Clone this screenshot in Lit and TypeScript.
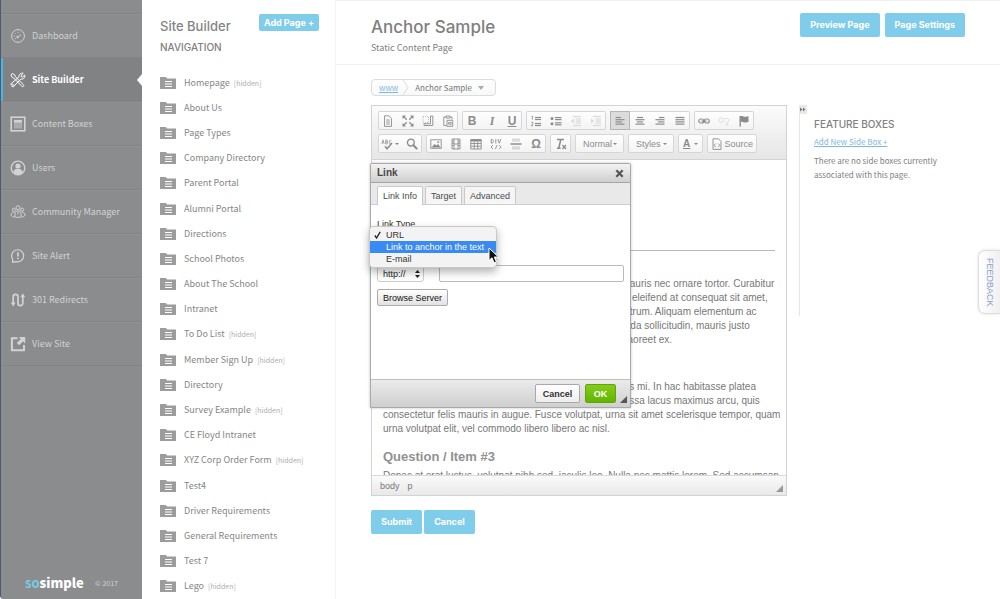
import { LitElement, html, svg, css, nothing } from "lit";
import { customElement } from "lit/decorators.js";
import { classMap } from "lit/directives/class-map.js";

const menuIcons: Record<string, unknown> = {
  dashboard: svg`<circle cx="8" cy="8" r="6.4"/><path d="M7.4 9.6 11 6.6M5 10.5h.9M3.8 8h1M5 5.3l.6.6M8 3.9v.9" /><circle cx="7.6" cy="9" r=".9"/>`,
  tools: svg`<path d="M2.2 1.4 4.9 3l.3 1.5 8.2 8.2a1.1 1.1 0 0 1-1.6 1.6L3.7 6 2.4 5.6 1 3z"/><path d="M13.2 1.3 11 3.4l.2 1.4 1.4.3 2.1-2.2c.6 1.7-.2 3.6-2 4.1-.6.2-1.2.1-1.7 0L4.9 13c-.2 1.5-1.8 2.1-3 1.5l1.600-1.600-.8-1-1.600 1.300c-.5-1.200.3-2.700 1.700-2.900L9 4.900C8.500 2.800 11 .5 13.200 1.300z"/>`,
  boxes: svg`<rect x="1.2" y="1.2" width="13.6" height="13.6" stroke-width="1.6"/><rect x="4" y="4" width="8" height="8.5" fill="currentColor" opacity=".45" stroke="none"/><path d="M4 5.2h8" stroke-width="2.6"/>`,
  users: svg`<circle cx="8" cy="8" r="6.8" stroke-width="1.3"/><circle cx="8" cy="6" r="2.6" fill="currentColor" stroke="none"/><path d="M3.4 12.6c.3-3 1.8-3.6 4.6-3.6s4.3.6 4.6 3.6A6.5 6.5 0 0 1 8 14.3a6.5 6.5 0 0 1-4.6-1.7z" fill="currentColor" stroke="none"/>`,
  community: svg`<circle cx="8" cy="3.8" r="2"/><circle cx="3.8" cy="5.6" r="1.5"/><circle cx="12.2" cy="5.6" r="1.5"/><path d="M4.8 12.5 5.2 8c1-1.3 4.6-1.3 5.6 0l.4 4.5c-1 1.2-5.4 1.2-6.4 0zM4 8c-2 0-2.6 1-2.9 3.5.7 1 2 1.5 3.7 1.6M12 8c2 0 2.6 1 2.9 3.5-.7 1-2 1.5-3.7 1.6M8 7.5v3"/>`,
  alert: svg`<path d="M2.6 14.2V11A6 6 0 1 1 6.200 13.600z" stroke-width="1.200"/><path d="M8 4.2v4.3" stroke-width="1.7"/><path d="M8 9.8v1.5" stroke-width="1.7"/>`,
  redirects: svg`<path d="M3.2 12V4.8a2.4 2.4 0 0 1 4.8 0v6.4a2.4 2.4 0 0 0 4.8 0V4" stroke-width="1.7"/><path d="M.8 10.5h4.800l-2.400 4zM10.400 5.200h4.800l-2.400-4z" fill="currentColor" stroke="none"/>`,
  view: svg`<path d="M7.5 2.2H1.900V14.200H14V9" stroke-width="2"/><path d="M8.800 1h6.400v6.400l-2.100-2.100-4 4-2.300-2.300 4-4z" fill="currentColor" stroke="none"/>`,
};

const lines = (rows: [number, number, number][]) =>
  rows.map(([x1, x2, y]) => svg`<path d="M${x1} ${y}H${x2}" stroke-width="1.2"/>`);

const toolIcons: Record<string, unknown> = {
  doc: svg`<path d="M2.5.8h4.5l2.500 2.600v8H2.500zM4.200 5h3.600M4.200 7h3.600M4.200 9h3.600"/>`,
  maximize: svg`<path d="M1.5 1.5 4.7 4.7M10.5 1.5 7.3 4.7M1.5 10.5l3.2-3.2M10.5 10.5 7.3 7.3" stroke-width="1.3"/><path d="M.5.5H4L.5 4zM11.5.5V4L8 .5zM.5 11.5V8L4 11.5zM11.5 11.5H8L11.5 8z" fill="currentColor" stroke="none"/>`,
  blocks: svg`<path d="M1 1.5h5.500v6H1z" stroke-dasharray="1 1" opacity=".6"/><path d="M8.500 1h2.300v9.500H2v-1.800h6.500z"/>`,
  paste: svg`<path d="M4 2H1.800v8.500H4.500M8 2h2v2.500M4 1h4v2H4z"/><path d="M5 5.300h5.700v6H5zM6.700 7.400h2.500v1.800H6.700z"/>`,
  numbers: svg`<path d="M1.500 1.200h.9v3.300M1.300 7.300h1.500v1.500L1.300 10.800h1.700"/>${lines([[5, 11, 2.5], [5, 11, 4.5], [5, 11, 8.5], [5, 11, 10.5]])}`,
  bullets: svg`<circle cx="2" cy="3.5" r="1.5" fill="currentColor" stroke="none"/><circle cx="2" cy="8.7" r="1.5" fill="currentColor" stroke="none"/>${lines([[5, 11.5, 2.6], [5, 11.5, 4.6], [5, 11.5, 7.8], [5, 11.5, 9.8]])}`,
  outdent: svg`<path d="M.8 6 3.8 3.500v5z" fill="currentColor" stroke="none"/>${lines([[3, 11, 1.5], [5.5, 11, 4], [5.5, 11, 6], [5.5, 11, 8], [3, 11, 10.5]])}`,
  indent: svg`<path d="M4 6 1 3.500v5z" fill="currentColor" stroke="none"/>${lines([[3, 11, 1.5], [5.5, 11, 4], [5.5, 11, 6], [5.5, 11, 8], [3, 11, 10.5]])}`,
  left: svg`${lines([[1.5, 7, 2.5], [1.5, 10.5, 4.7], [1.5, 8, 6.9], [1.5, 10.5, 9.1]])}`,
  center: svg`${lines([[3, 9, 2.5], [1.5, 10.5, 4.7], [3, 9, 6.9], [1.5, 10.5, 9.1]])}`,
  right: svg`${lines([[5, 10.5, 2.5], [1.5, 10.5, 4.7], [4, 10.5, 6.9], [1.5, 10.5, 9.1]])}`,
  justify: svg`${lines([[1.5, 10.5, 2.5], [1.5, 10.5, 4.7], [1.5, 10.5, 6.9], [1.5, 10.5, 9.1]])}`,
  link: svg`<rect x=".8" y="4" width="5" height="4" rx="2" stroke-width="1.2"/><rect x="6.2" y="4" width="5" height="4" rx="2" stroke-width="1.2"/><path d="M3.5 6h5" stroke-width="1.2"/>`,
  unlink: svg`<rect x=".8" y="3" width="5" height="4" rx="2"/><path d="M7 3.5h2.500a1.800 1.800 0 0 1 0 3.500H8M7.500 8l3 3M10.500 8l-3 3"/>`,
  flag: svg`<path d="M2.2 1v10.5" stroke-width="1.4"/><path d="M2.5 1.2c2-.8 3.4.8 5 .5.9-.1 1.8-.5 3-.5V7c-1.200 0-2 .5-3 .6-1.800.1-3-1.300-5-.6z" fill="currentColor" stroke="none"/>`,
  find: svg`<circle cx="4.8" cy="4.6" r="3.4" stroke-width="1.3"/><path d="m7.4 7.2 3.8 3.9" stroke-width="2"/>`,
  image: svg`<rect x=".8" y="1.8" width="10.4" height="8.5"/><path d="M1.5 9.5 4.5 6l1.800 1.500L8 6l2.700 3.500z" fill="currentColor" stroke="none"/><circle cx="8.3" cy="4.2" r=".9" fill="currentColor" stroke="none"/>`,
  film: svg`<path d="M2 1h8v10H2zM4 1v10M8 1v10M4 6h4M2 3.200h2M2 5.400h2M2 7.600h2M8 3.200h2M8 5.400h2M8 7.600h2"/>`,
  table: svg`<path d="M.8 1.5h10.400v9.500H.8zM.8 5.500h10.400M.8 8.200h10.400M4.200 3.500V11M7.700 3.500V11"/><path d="M.8 2.500h10.400" stroke-width="2"/>`,
  rule: svg`<path d="M2 1.2h8M2 3h8M2 9h8M2 10.800h8" opacity=".55"/><path d="M.5 6h11" stroke-width="1.5"/>`,
  source: svg`<path d="M2 .8h5.500L10 3.400v8H2z"/><path d="M4.800 5.500 3.200 7.300l1.600 1.800M7.200 5.500l1.600 1.800-1.600 1.800"/>`,
};

const icon12 = (name: string) =>
  html`<svg class="ico" viewBox="0 0 12 12" width="12" height="12" aria-hidden="true">${toolIcons[name]}</svg>`;

const menu = [
  ["dashboard", "Dashboard"],
  ["tools", "Site Builder"],
  ["boxes", "Content Boxes"],
  ["users", "Users"],
  ["community", "Community Manager"],
  ["alert", "Site Alert"],
  ["redirects", "301 Redirects"],
  ["view", "View Site"],
];

const pages: { name: string; hidden?: boolean }[] = [
  { name: "Homepage", hidden: true },
  { name: "About Us" },
  { name: "Page Types" },
  { name: "Company Directory" },
  { name: "Parent Portal" },
  { name: "Alumni Portal" },
  { name: "Directions" },
  { name: "School Photos" },
  { name: "About The School" },
  { name: "Intranet" },
  { name: "To Do List", hidden: true },
  { name: "Member Sign Up", hidden: true },
  { name: "Directory" },
  { name: "Survey Example", hidden: true },
  { name: "CE Floyd Intranet" },
  { name: "XYZ Corp Order Form", hidden: true },
  { name: "Test4" },
  { name: "Driver Requirements" },
  { name: "General Requirements" },
  { name: "Test 7" },
  { name: "Lego", hidden: true },
];

const base = css`
  *, *::before, *::after { box-sizing: border-box; }
  button, input, select { font: inherit; color: inherit; margin: 0; padding: 0; border: 0; background: none; }
  h1, h2, h3, p, ul { margin: 0; padding: 0; }
  ul { list-style: none; }
`;

@customElement("main-menu")
class MainMenu extends LitElement {
  static styles = [base, css`
    :host {
      display: flex; flex-direction: column; justify-content: space-between;
      background: #8a8c8d; border-left: 1px solid #4b5a76; border-bottom-left-radius: 4px;
      color: #d2d3d4; font: 9px/16px "Noto Sans CJK SC", sans-serif;
    }
    .list { padding-top: 13px; }
    .link {
      position: relative; display: flex; align-items: center; gap: 6px; height: 44px; padding-left: 9px;
      border-top: 1px solid #828485; color: inherit; text-decoration: none;
      box-shadow: inset 0 1px 0 #909293;
    }
    .list li:last-child { border-bottom: 1px solid #828485; }
    .active { background: #808283; color: #fff; font-weight: 700; box-shadow: inset 2px 0 0 #4db5de; }
    .active::after {
      content: ""; position: absolute; right: 0; top: 16px;
      border: 6px solid transparent; border-left-width: 0; border-right: 5px solid #fff;
    }
    .glyph { fill: none; stroke: currentColor; stroke-width: 1; }
    .foot { display: flex; align-items: center; justify-content: space-between; padding: 0 24px 6px; }
    .logo { font-size: 13px; line-height: 20px; font-weight: 900; color: #fff; }
    .so { color: #7cc9e6; font-weight: 700; }
    .year { font-size: 7px; }
  `];
  render() {
    return html`
      <nav aria-label="Main"><ul class="list">
        ${menu.map(([key, label]) => html`<li><a href="#${key}" class=${classMap({ link: true, active: key === "tools" })}>
          <svg class="glyph" viewBox="0 0 16 16" width="16" height="16" aria-hidden="true">${menuIcons[key]}</svg>${label}</a></li>`)}
      </ul></nav>
      <div class="foot"><div class="logo"><span class="so">so</span>simple</div><div class="year">© 2017</div></div>`;
  }
}

@customElement("page-tree")
class PageTree extends LitElement {
  static styles = [base, css`
    :host {
      display: flex; flex-direction: column; background: #fff; border-right: 1px solid #f4f4f4;
      color: #868686; font: 9px/16px "Noto Sans CJK SC", sans-serif;
    }
    .head { display: flex; justify-content: space-between; align-items: flex-start; padding: 14px 16px 0 18px; height: 70px; }
    h2 { font: 500 13px/24px Inter, sans-serif; color: #858585; }
    h3 { font: 500 10px/18px Inter, sans-serif; color: #808080; }
    .add { font: 700 9px/17px Inter, sans-serif; color: #fff; background: #7fcdea; border-radius: 2px; width: 60px; cursor: pointer; }
    .tree { flex: 1; display: grid; grid-auto-rows: minmax(25px, 1fr); padding-left: 18px; }
    .row { display: flex; align-items: center; }
    .page { display: flex; align-items: center; gap: 8px; color: inherit; text-decoration: none; }
    .tag { font-size: 7px; color: #adadad; margin-left: 4px; }
  `];
  render() {
    return html`
      <header class="head"><div><h2>Site Builder</h2><h3>NAVIGATION</h3></div><button class="add">Add Page +</button></header>
      <ul class="tree">
        ${pages.map((p) => html`<li class="row"><a class="page" href="#page">
          <svg viewBox="0 0 16 12" width="16" height="12" aria-hidden="true"><path d="M0 0h6l1 1.5h9V12H0z" fill="#9c9c9c"/><path d="M5 4.500h7M5 7h7M5 9.500h7" stroke="#fff" stroke-width="1"/></svg>${p.name}</a>
          ${p.hidden ? html`<span class="tag">[hidden]</span>` : nothing}</li>`)}
      </ul>`;
  }
}

@customElement("link-dialog")
class LinkDialog extends LitElement {
  static styles = [base, css`
    :host {
      display: flex; flex-direction: column; background: #fff; border: 1px solid #a9a9a9; border-radius: 2px 2px 0 0;
      box-shadow: 0 0 3px rgba(0, 0, 0, .25); font: 9px/12px "Liberation Sans", Arial, sans-serif; color: #333;
    }
    .title {
      display: flex; align-items: center; justify-content: space-between; height: 19px; padding: 0 6px;
      background: linear-gradient(#f3f3f3, #cfcfcf); border-bottom: 1px solid #a5a5a5;
    }
    h2 { font-size: 10px; line-height: 12px; font-weight: 700; color: #474747; }
    .close { display: flex; cursor: pointer; }
    .tabs { display: flex; gap: 2px; align-items: flex-end; height: 22px; padding: 0 6px; background: #e9e9e9; border-bottom: 1px solid #cecece; }
    .tab {
      height: 18px; padding: 0 5px; background: #f5f5f5; color: #4c4c4c; border: 1px solid #c9c9c9; border-bottom: 0;
      border-radius: 2px 2px 0 0; cursor: pointer;
    }
    .current { background: #fff; height: 19px; margin-bottom: -1px; }
    .body { flex: 1; padding: 13px 6px 0; position: relative; }
    .label { display: block; }
    .kind { display: block; width: 64px; height: 16px; margin-bottom: 19px; }
    .url { display: flex; gap: 15px; margin-bottom: 7px; }
    .proto { position: relative; }
    .proto select {
      width: 47px; height: 17px; padding: 0 5px; appearance: none; color: #222;
      border: 1px solid #ccc; border-radius: 3px; background: #fff;
    }
    .arrows { position: absolute; right: 4px; top: 5px; pointer-events: none; }
    .field { flex: 1; min-width: 0; height: 17px; border: 1px solid #bbb; border-radius: 2px; padding: 0 3px; }
    .btn {
      height: 17px; width: 71px; color: #111; border: 1px solid #ababab; border-radius: 2px;
      background: linear-gradient(#fff, #e2e2e2); cursor: pointer;
    }
    .foot {
      display: flex; justify-content: flex-end; gap: 5px; height: 28px; padding: 4px 14px 0 0; position: relative;
      background: linear-gradient(#ebebeb, #cfcfcf); border-top: 1px solid #bfbfbf;
    }
    .action { height: 19px; width: 45px; font-weight: 700; border: 1px solid #a9a9a9; border-radius: 2px; background: linear-gradient(#fff, #ededed); cursor: pointer; }
    .ok { width: 31px; color: #fff; border-color: #62a60a; background: linear-gradient(#84cc1c, #62b401); }
    .grip { position: absolute; right: 3px; bottom: 4px; border-bottom: 7px solid #555; border-left: 7px solid transparent; }
    .popup {
      position: absolute; left: -2px; top: 21px; width: 128px; padding: 2px 0; background: #f3f3f3;
      border: 1px solid #c8c8c8; border-radius: 4px; box-shadow: 0 4px 8px rgba(0, 0, 0, .3);
    }
    .option { position: relative; height: 12px; padding-left: 16px; }
    .picked { background: #3a8af3; color: #fff; }
    .check { position: absolute; left: 4px; top: 2px; }
    .cursor { position: absolute; left: 118px; top: 20px; }
  `];
  render() {
    return html`
      <header class="title"><h2>Link</h2>
        <button class="close" aria-label="Close"><svg width="9" height="9" viewBox="0 0 9 9"><path d="M1.3 1.3l6.4 6.4M7.7 1.3 1.3 7.7" stroke="#555" stroke-width="2.2"/></svg></button></header>
      <div class="tabs" role="tablist">
        <button class="tab current" role="tab" aria-selected="true">Link Info</button>
        <button class="tab" role="tab">Target</button>
        <button class="tab" role="tab">Advanced</button>
      </div>
      <div class="body">
        <label class="label" for="kind">Link Type</label>
        <select id="kind" class="kind"><option>URL</option><option>Link to anchor in the text</option><option>E-mail</option></select>
        <div class="url">
          <div class="proto"><select aria-label="Protocol"><option>http://</option><option>https://</option></select>
            <svg class="arrows" width="5" height="8" viewBox="0 0 5 8" aria-hidden="true"><path d="M0 3 2.5 0 5 3zM0 5l2.500 3L5 5z" fill="#222"/></svg></div>
          <input class="field" type="text" aria-label="URL">
        </div>
        <button class="btn">Browse Server</button>
        <ul class="popup" role="listbox" aria-label="Link Type">
          <li class="option" role="option"><svg class="check" width="7" height="8" viewBox="0 0 7 8" aria-hidden="true"><path d="M.8 4.5 2.6 7 6.2.8" fill="none" stroke="#222" stroke-width="1.3"/></svg>URL</li>
          <li class="option picked" role="option" aria-selected="true">Link to anchor in the text</li>
          <li class="option" role="option">E-mail</li>
          <svg class="cursor" width="12" height="18" viewBox="0 0 12 18" aria-hidden="true"><path d="M1 1v12.500l3-2.700 2 5 2.400-1-2.100-4.800h4.200z" fill="#111" stroke="#fff" stroke-width="1"/></svg>
        </ul>
      </div>
      <footer class="foot"><button class="action">Cancel</button><button class="action ok">OK</button><span class="grip"></span></footer>`;
  }
}

@customElement("rich-editor")
class RichEditor extends LitElement {
  static styles = [base, css`
    :host {
      display: block; position: relative; border: 1px solid #d3d3d3; background: #fff;
      font: 10px/14px "Liberation Sans", Arial, sans-serif; color: #777;
    }
    .bar { display: flex; flex-direction: column; gap: 4px; padding: 5px 5px 6px 6px; background: linear-gradient(#fbfbfb, #e6e6e6); border-bottom: 1px solid #d3d3d3; }
    .line { display: flex; gap: 4px; }
    .group { display: flex; height: 19px; border-radius: 2px; background: linear-gradient(#fff, #f3f3f3); box-shadow: inset 0 0 0 1px #d6d6d6; }
    .tool { width: 20px; display: flex; align-items: center; justify-content: center; color: #8c8c8c; cursor: pointer; }
    .on { background: #dcdcdc; box-shadow: inset 0 0 0 1px #b5b5b5; }
    .off { color: #dadada; }
    .ico { fill: none; stroke: currentColor; stroke-width: .9; }
    .narrow { width: 21px; }
    .spell { width: 24px; }
    .letter { font-size: 12px; font-weight: 700; }
    .serif { font-family: "Liberation Serif", serif; font-style: italic; }
    .under { text-decoration: underline; }
    .menu { display: flex; align-items: center; justify-content: space-between; padding: 0 7px 0 8px; color: #8b8b8b; width: 49px; font-size: 9px; cursor: pointer; }
    .styles { width: 46px; }
    .color { width: 25px; padding: 0 5px; font-size: 10px; }
    .source { width: 50px; padding: 0 4px; }
    .menu::after { content: ""; border: 2px solid transparent; border-top-color: #888; border-bottom: 0; }
    .source::after { display: none; }
    .caret { margin-left: 1px; border: 2px solid transparent; border-top-color: #888; border-bottom: 0; }
    .page { height: 315px; overflow: hidden; padding: 14px 11px 0; }
    .page p, .page h3, .page ul { white-space: nowrap; }
    h2, h3 { font-size: 13px; line-height: 14px; font-weight: 700; color: #919191; margin-bottom: 5px; }
    hr { margin: 15px 0 7px; border: 0; border-top: 1px solid #b9b9b9; }
    .page p { margin-bottom: 14px; }
    .path { display: flex; align-items: center; gap: 8px; height: 20px; padding: 0 8px; border-top: 1px solid #d9d9d9; background: linear-gradient(#fafafa, #e9e9e9); font-size: 9px; position: relative; }
    .grip { position: absolute; right: 3px; bottom: 3px; border-bottom: 7px solid #999; border-left: 7px solid transparent; }
    link-dialog { position: absolute; left: -2px; top: 57px; width: 261px; height: 245px; }
  `];
  private tool(name: string, label: string, extra = "") {
    return html`<button class="tool ${extra}" aria-label=${label}>${icon12(name)}</button>`;
  }
  render() {
    return html`
      <div class="bar" role="toolbar" aria-label="Formatting">
        <div class="line">
          <div class="group">${this.tool("doc", "Templates")}${this.tool("maximize", "Maximize")}${this.tool("blocks", "Show blocks")}${this.tool("paste", "Paste")}</div>
          <div class="group"><button class="tool letter">B</button><button class="tool letter serif">I</button><button class="tool letter under">U</button></div>
          <div class="group">${this.tool("numbers", "Numbered list")}${this.tool("bullets", "Bulleted list")}${this.tool("outdent", "Outdent", "off")}${this.tool("indent", "Indent", "off")}</div>
          <div class="group">${this.tool("left", "Align left", "on")}${this.tool("center", "Center")}${this.tool("right", "Align right")}${this.tool("justify", "Justify")}</div>
          <div class="group">${this.tool("link", "Link")}${this.tool("unlink", "Unlink", "off")}${this.tool("flag", "Anchor")}</div>
        </div>
        <div class="line">
          <div class="group"><button class="tool spell" aria-label="Check spelling">
            <svg class="ico" width="13" height="12" viewBox="0 0 13 12"><path d="M.8 6 2 1.8 3.2 6M1.2 4.6h1.600M4.700 2v4h1.100a1 1 0 0 0 0-2H4.700h1a1 1 0 0 0 0-2zM10.300 2.600a1.500 1.500 0 1 0 0 2.800" stroke-width=".7"/><path d="M4 8.200 6 10.800 11 5" stroke-width="1.5"/></svg><span class="caret"></span></button>${this.tool("find", "Find")}</div>
          <div class="group">${this.tool("image", "Image")}${this.tool("film", "Video")}${this.tool("table", "Table")}<button class="tool" aria-label="Div container">
            <svg class="ico" width="12" height="12" viewBox="0 0 12 12"><path d="M1.2 1.3v3.900c3 0 3-3.900 0-3.900zM5.800 1v4.500M7.800 1l1.500 4.200L10.800 1M3 7 1 9l2 2M9.200 7l2 2-2 2M7 7l-1.600 4" /></svg></button>${this.tool("rule", "Horizontal line")}<button class="tool letter">Ω</button></div>
          <div class="group"><button class="tool narrow" aria-label="Remove format">
            <svg class="ico" width="12" height="12" viewBox="0 0 12 12"><path d="M2 1.5h7M5.800 1.500 3.800 10M2 10.200h3.600" stroke-width="1.5"/><path d="m7.5 7 3.500 4M11 7l-3.500 4" stroke-width="1.2"/></svg></button></div>
          <div class="group"><button class="menu">Normal</button></div>
          <div class="group"><button class="menu styles">Styles</button></div>
          <div class="group"><button class="menu color"><b class="under">A</b></button></div>
          <div class="group"><button class="menu source">${icon12("source")}Source</button></div>
        </div>
      </div>
      <div class="page">
        <h2>Anchor Sample</h2>
        <ul><li>Question / Item #1</li><li>Question / Item #2</li><li>Question / Item #3</li></ul>
        <hr>
        <h3>Question / Item #1</h3>
        <p>Lorem ipsum dolor amet, consectetur adipiscing velit. Mauris nec ornare tortor. Curabitur<br>
          Vestibulum mauris libero, scelerisque non pharetra sed, eleifend at consequat sit amet,<br>
          pellentesque id nunc. Sed vitae lacinia eget eu lectus rutrum. Aliquam elementum ac<br>
          tellus, vitae bibendum nunc. Donec at eros nisi malesuada sollicitudin, mauris justo<br>
          sed consectetur felis mauris in posuere eget tortor nisi laoreet ex.</p>
        <h3>Question / Item #2</h3>
        <p>Lorem ipsum dolor amet, consectetur adipiscing nisi quis mi. In hac habitasse platea<br>
          dictumst. Vestibulum pharetra bibendum eget lectus massa lacus maximus arcu, quis<br>
          consectetur felis mauris in augue. Fusce volutpat, urna sit amet scelerisque tempor, quam<br>
          urna volutpat elit, vel commodo libero libero ac nisl.</p>
        <h3>Question / Item #3</h3>
        <p>Donec at erat luctus, volutpat nibh sed, iaculis leo. Nulla nec mattis lorem. Sed accumsan</p>
      </div>
      <div class="path"><span>body</span><span>p</span><span class="grip"></span></div>
      <link-dialog role="dialog" aria-label="Link"></link-dialog>`;
  }
}

@customElement("app-root")
class AppRoot extends LitElement {
  static styles = [base, css`
    :host {
      display: grid; grid-template-columns: 142px 194px minmax(0, 1fr); height: 100vh; overflow: hidden; position: relative;
      background: #fff; color: #808080; font: 9px/14px "Noto Sans CJK SC", sans-serif;
    }
    .head { display: flex; align-items: flex-start; justify-content: space-between; height: 65px; padding: 12px 35px 0; border-top: 1px solid #f1f1f1; border-bottom: 1px solid #f1f1f1; }
    h1 { font: 500 17px/28px Inter, sans-serif; color: #808080; }
    .buttons { display: flex; gap: 5px; }
    .primary { font: 700 9px/24px Inter, sans-serif; height: 24px; padding: 0 10px; color: #fff; background: #7fcdea; border-radius: 2px; cursor: pointer; }
    .content { padding: 14px 0 0 35px; }
    .crumbs {
      display: inline-flex; align-items: center; height: 17px; margin-bottom: 9px; padding: 0 11px 0 7px;
      border: 1px solid #dcdcdc; border-radius: 4px; font-size: 8px; color: #777; background: linear-gradient(#fff, #f8f8f8); vertical-align: top;
    }
    a { color: #7cb9e0; }
    .sep { margin: 0 6px 0 4px; }
    .down { margin-left: 6px; border: 3px solid transparent; border-top: 4px solid #aaa; border-bottom: 0; }
    .work { display: grid; grid-template-columns: minmax(0, 1fr) 201px; gap: 12px; align-items: start; }
    .side { position: relative; min-height: 211px; padding: 12px 35px 0 14px; border-left: 1px solid #e6e6e6; font-size: 8px; }
    .side h2 { font: 500 10px/14px Inter, sans-serif; color: #808080; margin-bottom: 4px; }
    .side p { margin-top: 5px; }
    .fold { position: absolute; left: -1px; top: 0; width: 8px; height: 9px; display: flex; align-items: center; justify-content: center; background: #e9e9e9; cursor: pointer; }
    .submit { display: flex; gap: 2px; margin-top: 14px; }
    .feedback {
      position: absolute; right: 0; top: 250px; width: 22px; height: 64px; writing-mode: vertical-rl;
      font: 9px/20px "Liberation Sans", Arial, sans-serif; color: #8d9cc9; text-align: center; cursor: pointer;
      background: linear-gradient(90deg, #fff, #f0f0f0); border: 1px solid #ddd; border-right: 0; border-radius: 7px 0 0 7px; box-shadow: 0 0 3px #ddd;
    }
  `];
  render() {
    return html`
      <main-menu></main-menu>
      <page-tree></page-tree>
      <main>
        <header class="head">
          <div><h1>Anchor Sample</h1><div>Static Content Page</div></div>
          <div class="buttons"><button class="primary">Preview Page</button><button class="primary">Page Settings</button></div>
        </header>
        <div class="content">
          <nav class="crumbs" aria-label="Breadcrumb"><a href="#www">www</a>
            <svg class="sep" width="7" height="15" viewBox="0 0 7 15" aria-hidden="true"><path d="M1 0 6 7.5 1 15" fill="none" stroke="#dcdcdc"/></svg>
            <span>Anchor Sample</span><span class="down"></span></nav>
          <div class="work">
            <div>
              <rich-editor></rich-editor>
              <div class="submit"><button class="primary">Submit</button><button class="primary">Cancel</button></div>
            </div>
            <aside class="side">
              <button class="fold" aria-label="Collapse"><svg width="6" height="5" viewBox="0 0 6 5"><path d="M0 .5 2.5 2.500 0 4.500zM3 .5 5.500 2.500 3 4.500z" fill="#777"/></svg></button>
              <h2>FEATURE BOXES</h2>
              <a href="#add">Add New Side Box +</a>
              <p>There are no side boxes currently associated with this page.</p>
            </aside>
          </div>
        </div>
      </main>
      <button class="feedback">FEEDBACK</button>`;
  }
}
